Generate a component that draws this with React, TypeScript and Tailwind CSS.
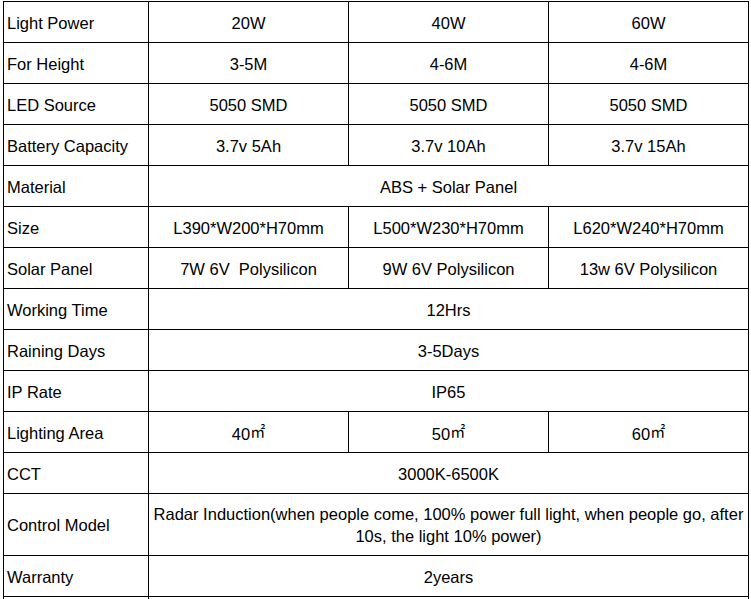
import React from "react";

type Row = {
    label: string;
    values: string[];
    tall?: boolean;
};

const rows: Row[] = [
    { label: "Light Power", values: ["20W", "40W", "60W"] },
    { label: "For Height", values: ["3-5M", "4-6M", "4-6M"] },
    { label: "LED Source", values: ["5050 SMD", "5050 SMD", "5050 SMD"] },
    { label: "Battery Capacity", values: ["3.7v 5Ah", "3.7v 10Ah", "3.7v 15Ah"] },
    { label: "Material", values: ["ABS + Solar Panel"] },
    { label: "Size", values: ["L390*W200*H70mm", "L500*W230*H70mm", "L620*W240*H70mm"] },
    { label: "Solar Panel", values: ["7W 6V\u00a0 Polysilicon", "9W 6V Polysilicon", "13w 6V Polysilicon"] },
    { label: "Working Time", values: ["12Hrs"] },
    { label: "Raining Days", values: ["3-5Days"] },
    { label: "IP Rate", values: ["IP65"] },
    { label: "Lighting Area", values: ["40㎡", "50㎡", "60㎡"] },
    { label: "CCT", values: ["3000K-6500K"] },
    {
        label: "Control Model",
        values: ["Radar Induction(when people come, 100% power full light, when people go, after 10s, the light 10% power)"],
        tall: true,
    },
    { label: "Warranty", values: ["2years"] },
    { label: "", values: [""] },
];

const renderValue = (v: string) => {
    const idx = v.indexOf("㎡");
    if (idx === -1) return v;
    return (
        <>
            {v.slice(0, idx)}
            <span className="text-[15px] align-[3px] font-['Noto_Sans_CJK_SC',sans-serif]">㎡</span>
        </>
    );
};

const App: React.FC = () => {
    return (
        <div className="w-[751px] h-[599px] overflow-hidden bg-white pt-[1px] pl-[3px]">
            <table className="border-collapse table-fixed text-[16.5px] text-black font-['Liberation_Sans',Arial,sans-serif]">
                <colgroup>
                    <col className="w-[145px]" />
                    <col className="w-[200px]" />
                    <col className="w-[200px]" />
                    <col className="w-[200px]" />
                </colgroup>
                <tbody>
                    {rows.map((row, i) => (
                        <tr key={i} className={row.tall ? "h-[62px]" : "h-[41px]"}>
                            <td className="border border-black pl-[3px] pr-0.5 pt-px pb-0 align-middle leading-[20px]">
                                {row.label}
                            </td>
                            {row.values.length === 1 ? (
                                <td colSpan={3} className="border border-black px-0.5 pt-px pb-0 text-center align-middle leading-[22px]">
                                    {renderValue(row.values[0])}
                                </td>
                            ) : (
                                row.values.map((v, j) => (
                                    <td key={j} className="border border-black px-0.5 pt-px pb-0 text-center align-middle leading-[20px]">
                                        {renderValue(v)}
                                    </td>
                                ))
                            )}
                        </tr>
                    ))}
                </tbody>
            </table>
        </div>
    );
};

export default App;
